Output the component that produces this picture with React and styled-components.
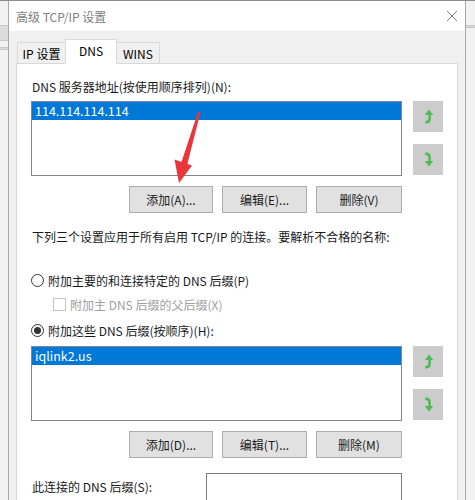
import styled, { createGlobalStyle } from "styled-components";

const GlobalStyle = createGlobalStyle`
  html, body {
    margin: 0;
    padding: 0;
  }
  body {
    width: 475px;
    height: 500px;
    overflow: hidden;
    background: #ececec;
    font-family: "Noto Sans CJK SC", "Noto Sans", sans-serif;
    font-size: 12px;
    color: #1a1a1a;
  }
`;

const Screen = styled.div`
  position: relative;
  display: flex;
  width: 475px;
  height: 500px;
  overflow: hidden;
  border-top: 1px solid #8c8c8c;
  box-sizing: border-box;
`;

const BackStrip = styled.div`
  width: ${({ $w }) => $w}px;
  flex-shrink: 0;
  background: #f2f2f2;
  display: flex;
  flex-direction: column;
  gap: 6px;
  padding-top: 24px;
  box-sizing: border-box;
`;

const BackLine = styled.div`
  height: ${({ $h }) => $h}px;
  background: #dcdcdc;
  border-top: 1px solid #c8c8c8;
  border-bottom: 1px solid #c8c8c8;
`;

const Dialog = styled.div`
  width: 458px;
  flex-shrink: 0;
  display: flex;
  flex-direction: column;
  background: #f0f0f0;
  border-left: 1px solid #a8a8a8;
  border-right: 1px solid #a8a8a8;
  box-sizing: border-box;
`;

const TitleBar = styled.div`
  height: 30px;
  flex-shrink: 0;
  background: #ffffff;
  display: flex;
  align-items: center;
  justify-content: space-between;
  padding: 0 7px 0 7px;
`;

const Title = styled.span`
  font-size: 12px;
  color: #808080;
`;

const Body = styled.div`
  flex: 1;
  display: flex;
  flex-direction: column;
  padding: 9px 7px 0 7px;
`;

const TabStrip = styled.div`
  display: flex;
  align-items: flex-end;
  height: 24px;
  padding-left: 1px;
  margin-bottom: -1px;
  position: relative;
  z-index: 1;
`;

const Tab = styled.div`
  width: ${({ $w }) => $w}px;
  height: ${({ $active }) => ($active ? 25 : 22)}px;
  box-sizing: border-box;
  display: flex;
  align-items: center;
  justify-content: center;
  padding-bottom: ${({ $active }) => ($active ? 3 : 0)}px;
  font-size: 12px;
  color: #000;
  background: ${({ $active }) => ($active ? "#ffffff" : "#f0f0f0")};
  border: 1px solid #d9d9d9;
  border-bottom: ${({ $active }) => ($active ? "none" : "1px solid #d9d9d9")};
  margin-left: ${({ $active }) => ($active ? "-1px" : "0")};
  margin-right: ${({ $active }) => ($active ? "-1px" : "0")};
`;

const Panel = styled.div`
  flex: 1;
  background: #ffffff;
  border: 1px solid #d9d9d9;
  border-bottom: none;
  padding: 15px 14px 0 14px;
  display: flex;
  flex-direction: column;
`;

const Label = styled.div`
  height: 16px;
  line-height: 16px;
  padding-left: 1px;
  margin-top: ${({ $mt }) => $mt || 0}px;
  color: ${({ $disabled }) => ($disabled ? "#a0a0a0" : "#1a1a1a")};
  white-space: nowrap;
`;

const ListRow = styled.div`
  display: flex;
  gap: 11px;
  margin-top: ${({ $mt }) => $mt}px;
`;

const ListBox = styled.div`
  width: 371px;
  height: 75px;
  box-sizing: border-box;
  border: 1px solid #828790;
  padding: 0;
  background: #fff;
`;

const ListItem = styled.div`
  height: 18px;
  line-height: 18px;
  padding-left: 3px;
  background: #0078d7;
  color: #ffffff;
  font-size: 12.5px;
`;

const SideButtons = styled.div`
  display: flex;
  flex-direction: column;
  gap: 12px;
`;

const MoveButton = styled.div`
  width: 30px;
  height: 31px;
  background: #cccccc;
  display: flex;
  align-items: center;
  justify-content: center;
`;

const ButtonRow = styled.div`
  width: 371px;
  display: flex;
  justify-content: flex-end;
  gap: 9px;
  margin-top: 10px;
`;

const Button = styled.div`
  width: ${({ $w }) => $w}px;
  height: 27px;
  box-sizing: border-box;
  background: #e1e1e1;
  border: 1px solid #adadad;
  display: flex;
  align-items: center;
  justify-content: center;
  color: #1a1a1a;
`;

const OptionRow = styled.div`
  display: flex;
  align-items: center;
  gap: 4px;
  height: 16px;
  margin-top: ${({ $mt }) => $mt}px;
  padding-left: ${({ $indent }) => $indent || 0}px;
  color: ${({ $disabled }) => ($disabled ? "#a0a0a0" : "#1a1a1a")};
  white-space: nowrap;
`;

const Radio = styled.span`
  width: 13px;
  height: 13px;
  box-sizing: border-box;
  border-radius: 50%;
  border: 1px solid #333;
  display: flex;
  align-items: center;
  justify-content: center;
  &::after {
    content: "";
    width: 7px;
    height: 7px;
    border-radius: 50%;
    background: ${({ $checked }) => ($checked ? "#333" : "transparent")};
  }
`;

const Check = styled.span`
  width: 13px;
  height: 13px;
  box-sizing: border-box;
  border: 1px solid #c4c4c4;
  background: #fff;
`;

const SuffixRow = styled.div`
  display: flex;
  align-items: flex-start;
  justify-content: space-between;
  width: 371px;
  margin-top: 15px;
`;

const SuffixLabel = styled.div`
  margin-top: 6px;
  padding-left: 1px;
  line-height: 16px;
`;

const TextBox = styled.div`
  width: 196px;
  height: 30px;
  box-sizing: border-box;
  border: 1px solid #7a7a7a;
  border-bottom: none;
`;

const Overlay = styled.svg`
  position: absolute;
  left: 0;
  top: 0;
  pointer-events: none;
`;

const CloseIcon = () => (
  <svg width="12" height="12" viewBox="0 0 12 12">
    <path d="M1 1 L11 11 M11 1 L1 11" stroke="#7a7a7a" strokeWidth="1" />
  </svg>
);

const MoveIcon = ({ down }) => (
  <svg width="12" height="17" viewBox="0 0 12 17">
    <g transform={down ? "translate(0 17) scale(1 -1)" : undefined}>
      <path
        d="M7 1.5 L11.3 7 L8.8 7 L8.8 11 Q8.8 15 5 15.5 L3.2 15.5 L3.2 13 Q6.3 12.9 6.3 10.5 L6.3 7 L2.8 7 Z"
        fill="#4fbb55"
      />
    </g>
  </svg>
);

const DnsList = ({ item }) => (
  <>
    <ListBox>
      <ListItem>{item}</ListItem>
    </ListBox>
    <SideButtons>
      <MoveButton>
        <MoveIcon />
      </MoveButton>
      <MoveButton>
        <MoveIcon down />
      </MoveButton>
    </SideButtons>
  </>
);

export default function App() {
  return (
    <Screen>
      <GlobalStyle />
      <BackStrip $w={8}>
        <BackLine $h={14} />
        <BackLine $h={1} />
      </BackStrip>
      <Dialog>
        <TitleBar>
          <Title>高级 TCP/IP 设置</Title>
          <CloseIcon />
        </TitleBar>
        <Body>
          <TabStrip>
            <Tab $w={49}>IP 设置</Tab>
            <Tab $w={52} $active>
              DNS
            </Tab>
            <Tab $w={44}>WINS</Tab>
          </TabStrip>
          <Panel>
            <Label>DNS 服务器地址(按使用顺序排列)(N):</Label>
            <ListRow $mt={6}>
              <DnsList item="114.114.114.114" />
            </ListRow>
            <ButtonRow>
              <Button $w={84}>添加(A)...</Button>
              <Button $w={85}>编辑(E)...</Button>
              <Button $w={86}>删除(V)</Button>
            </ButtonRow>
            <Label $mt={16}>
              下列三个设置应用于所有启用 TCP/IP 的连接。要解析不合格的名称:
            </Label>
            <OptionRow $mt={27}>
              <Radio />
              附加主要的和连接特定的 DNS 后缀(P)
            </OptionRow>
            <OptionRow $mt={8} $indent={22} $disabled>
              <Check />
              附加主 DNS 后缀的父后缀(X)
            </OptionRow>
            <OptionRow $mt={10}>
              <Radio $checked />
              附加这些 DNS 后缀(按顺序)(H):
            </OptionRow>
            <ListRow $mt={8}>
              <DnsList item="iqlink2.us" />
            </ListRow>
            <ButtonRow>
              <Button $w={84}>添加(D)...</Button>
              <Button $w={85}>编辑(T)...</Button>
              <Button $w={86}>删除(M)</Button>
            </ButtonRow>
            <SuffixRow>
              <SuffixLabel>此连接的 DNS 后缀(S):</SuffixLabel>
              <TextBox />
            </SuffixRow>
          </Panel>
        </Body>
      </Dialog>
      <BackStrip $w={9}>
        <BackLine $h={1} />
      </BackStrip>
      <Overlay width="475" height="500" viewBox="0 0 475 500">
        <polygon
          points="198.2,110.6 200.4,111.4 187,164.5 181,162.5"
          fill="#e8363a"
        />
        <polygon points="179,182 174.5,158.5 192,164.5" fill="#e8363a" />
      </Overlay>
    </Screen>
  );
}
